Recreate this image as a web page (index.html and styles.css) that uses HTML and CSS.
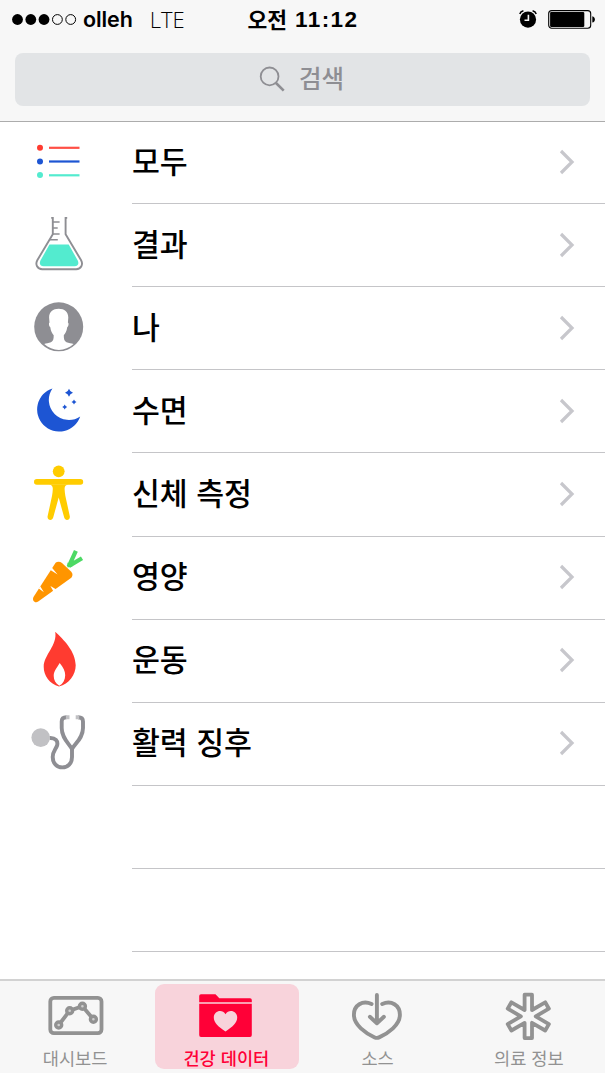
FILE: index.html
```html
<!DOCTYPE html>
<html lang="ko">
<head>
    <meta charset="UTF-8">
    <meta name="viewport" content="width=device-width, initial-scale=1.0">
    <title>건강 데이터</title>
    <link rel="stylesheet" href="styles.css">
</head>
<body>
    <div class="app">
        <div class="header">
            <div class="status-bar">
                <div class="status-left">
                    <svg class="signal" width="65" height="12" viewBox="0 0 65 12">
                        <circle cx="5.5" cy="5.5" r="5.4"/>
                        <circle cx="18.8" cy="5.5" r="5.4"/>
                        <circle cx="32" cy="5.5" r="5.4"/>
                        <circle class="empty" cx="45.4" cy="5.5" r="4.9"/>
                        <circle class="empty" cx="58.7" cy="5.5" r="4.9"/>
                    </svg>
                    <span class="carrier">olleh</span>
                    <span class="network">LTE</span>
                </div>
                <div class="status-time"><span class="ampm">오전</span><span class="clock">11:12</span></div>
                <div class="status-right">
                    <svg width="20" height="20" viewBox="0 0 20 20">
                        <circle cx="10" cy="9.6" r="8.1"/>
                        <path d="M1.8 4C2.3 2.2 3.6 1.2 5.4 0.8M18.2 4C17.7 2.2 16.4 1.2 14.6 0.8" fill="none" stroke="#000" stroke-width="1.5"/>
                        <path d="M10.4 4.8V10.3H6.5" fill="none" stroke="#f7f7f7" stroke-width="1.6"/>
                    </svg>
                    <svg width="48" height="20" viewBox="0 0 48 20">
                        <rect x="0.7" y="0.6" width="42" height="17.6" rx="3" fill="none" stroke="#000" stroke-width="1.1"/>
                        <rect x="2.1" y="1.9" width="34.2" height="15" rx="1.2"/>
                        <path d="M44.3 6.2C47.8 6.8 47.8 12 44.3 12.6Z"/>
                    </svg>
                </div>
            </div>
            <div class="search">
                <svg width="27" height="27" viewBox="0 0 27 27">
                    <circle cx="10.6" cy="10.4" r="8.9"/>
                    <path d="M17 17L24.7 24.6" stroke-width="2.6"/>
                </svg>
                <span>검색</span>
            </div>
        </div>

        <div class="list">
            <a href="#" class="row">
                <svg class="row-icon" viewBox="0 0 60 60">
                    <circle cx="11" cy="15.8" r="3" fill="#ff3b30"/>
                    <circle cx="11" cy="29.5" r="3" fill="#1d55d3"/>
                    <circle cx="11" cy="43.1" r="3" fill="#53ebcf"/>
                    <path d="M20 15.8H50.5" stroke="#ff4f45" stroke-width="2.2"/>
                    <path d="M20 29.5H50.5" stroke="#1d55d3" stroke-width="2.2"/>
                    <path d="M20 43.3H50.5" stroke="#53ebcf" stroke-width="2.2"/>
                </svg>
                <span class="row-label">모두</span>
                <svg class="chevron" viewBox="0 0 16 26"><path d="M2 2L13 13L2 24"/></svg>
            </a>
            <a href="#" class="row">
                <svg class="row-icon" viewBox="0 0 60 60">
                    <path d="M20.5 29.5H39.7L48.6 45.3C50.2 48.3 49.3 51.2 45.6 51.2H14.6C10.9 51.2 10 48.3 11.6 45.3Z" fill="#53ebcf"/>
                    <g fill="none" stroke="#8e8e93" stroke-width="1.9">
                        <path d="M22.2 2.9H23.8V19.3L8.3 45.2C6 49.5 8.3 54.2 13.2 54.2H47.2C52.1 54.2 54.4 49.5 52.1 45.2L36.6 19.3V2.9H38.2"/>
                        <path d="M24 7H30.6M24 13H28.7M23.5 19H30.6M20.8 24.8H28.8" stroke-width="1.6"/>
                    </g>
                </svg>
                <span class="row-label">결과</span>
                <svg class="chevron" viewBox="0 0 16 26"><path d="M2 2L13 13L2 24"/></svg>
            </a>
            <a href="#" class="row">
                <svg class="row-icon" viewBox="0 0 60 60">
                    <circle cx="29.7" cy="28.8" r="24.5" fill="#8e8e93"/>
                    <path d="M29.7 10.8C35.5 10.8 39.3 14 39.3 19.5L38.9 24.6C40 25.2 39.7 28.4 38.2 29.2C37.7 33 36.4 35.6 34.8 37.2C34.8 40.5 35 42.8 37.5 44.2C39.7 45.2 42.5 45 44.6 46.1C36.5 53.8 23.3 53.8 15.2 46.1C17 45 19.7 45.2 22 44.2C24.5 42.8 24.7 40.5 24.7 37.2C23.1 35.6 21.8 33 21.3 29.2C19.8 28.4 19.5 25.2 20.5 24.6L20.1 19.5C20.1 14 24 10.8 29.7 10.8Z" fill="#fff"/>
                </svg>
                <span class="row-label">나</span>
                <svg class="chevron" viewBox="0 0 16 26"><path d="M2 2L13 13L2 24"/></svg>
            </a>
            <a href="#" class="row">
                <svg class="row-icon" viewBox="0 0 60 60" fill="#1d55d3">
                    <path d="M23.5 7.4A22.1 22.1 0 1 0 51.2 35.4A20 20 0 0 1 23.5 7.4Z"/>
                    <path d="M40 7.8Q40.9 10.9 44 11.8Q40.9 12.7 40 15.8Q39.1 12.7 36 11.8Q39.1 10.9 40 7.8Z"/>
                    <path d="M45 18.6Q45.6 20.5 47.5 21.1Q45.6 21.7 45 23.6Q44.4 21.7 42.5 21.1Q44.4 20.5 45 18.6Z"/>
                    <path d="M35.7 23.6Q36.3 25.5 38.2 26.1Q36.3 26.7 35.7 28.6Q35.1 26.7 33.2 26.1Q35.1 25.5 35.7 23.6Z"/>
                </svg>
                <span class="row-label">수면</span>
                <svg class="chevron" viewBox="0 0 16 26"><path d="M2 2L13 13L2 24"/></svg>
            </a>
            <a href="#" class="row">
                <svg class="row-icon" viewBox="0 0 60 60" fill="#fc0">
                    <circle cx="29.7" cy="7.3" r="5.9"/>
                    <rect x="5" y="15.1" width="49.2" height="5.7" rx="2.8"/>
                    <path d="M20 20.5C22.7 20.8 23.9 22 23.8 25C23.6 30 22.7 33.5 21.7 38L18.6 52.3C17.9 56.3 23.2 57.5 24.2 53.6L29.7 33.5L35.2 53.6C36.2 57.5 41.5 56.3 40.8 52.3L37.7 38C36.7 33.5 35.8 30 35.6 25C35.5 22 36.7 20.8 39.4 20.5Z"/>
                </svg>
                <span class="row-label">신체 측정</span>
                <svg class="chevron" viewBox="0 0 16 26"><path d="M2 2L13 13L2 24"/></svg>
            </a>
            <a href="#" class="row">
                <svg class="row-icon" viewBox="0 0 60 60">
                    <path d="M26.6 15.8C28.3 14.2 31 14.3 33 16L42 24.4C44.3 26.8 43.6 29.6 41.6 31.3L9.2 54.6C6 56.8 2.7 53.4 4.5 50Z" fill="#ff9500"/>
                    <path d="M20.6 22.6L22.6 20.2L28.6 27.6ZM9.8 41.6L11.2 39.2L14.9 45.2ZM21.4 39L27.4 42.6L24.6 44.8Z" fill="#fff"/>
                    <path d="M39.6 19.8L46.9 3.8M40.5 18.6L53 11.3" stroke="#4cd964" stroke-width="4.2" fill="none"/>
                    <path d="M38.5 15.5L43.5 19.2L38.6 20.6Z" fill="#4cd964"/>
                </svg>
                <span class="row-label">영양</span>
                <svg class="chevron" viewBox="0 0 16 26"><path d="M2 2L13 13L2 24"/></svg>
            </a>
            <a href="#" class="row">
                <svg class="row-icon" viewBox="0 0 60 60">
                    <path d="M26.2 1.8C34.5 9.5 46.7 21.5 46.7 35.3C46.7 45 40 53.8 30 56.6C20.5 53.8 14.7 46 14.7 36.8C14.7 25 28.6 15.5 26.2 1.8Z" fill="#ff3b30"/>
                    <path d="M30.7 33C34.3 37.5 36.2 41 36.2 45.2C36.2 50 34 53.5 30.3 55.8C26.5 53.5 24.7 50 24.7 45.8C24.7 41 27.8 38 30.7 33Z" fill="#fff"/>
                </svg>
                <span class="row-label">운동</span>
                <svg class="chevron" viewBox="0 0 16 26"><path d="M2 2L13 13L2 24"/></svg>
            </a>
            <a href="#" class="row">
                <svg class="row-icon" viewBox="0 0 60 60">
                    <g fill="none" stroke="#8e8e93" stroke-width="3.9">
                        <path d="M20.5 25C26.2 24.6 29.5 28 28 32.8C26.5 36.7 23.7 38.4 23.7 44C23.7 50.5 28 54.4 33.3 54.4C38.8 54.4 43 50.5 43 44V35"/>
                        <path d="M37.5 4.3C34.2 4.3 32.7 5.6 32.7 8.5V15C32.7 25 39.5 30 43 36C46.5 30 54 25 54 15V8.5C54 5.6 52.2 4.3 49 4.3"/>
                    </g>
                    <circle cx="11.7" cy="24.6" r="9.3" fill="#c1c1c4"/>
                    <path d="M36.9 4.3H40.5M46.7 4.3H50.2" stroke="#c1c1c4" stroke-width="4"/>
                </svg>
                <span class="row-label">활력 징후</span>
                <svg class="chevron" viewBox="0 0 16 26"><path d="M2 2L13 13L2 24"/></svg>
            </a>
            <div class="row"></div>
            <div class="row"></div>
        </div>

        <div class="tab-bar">
            <a href="#" class="tab">
                <svg class="tab-icon" viewBox="0 0 60 50" fill="none" stroke="#929292">
                    <rect x="4.3" y="7.8" width="51.2" height="35.4" rx="3.6" stroke-width="3.8"/>
                    <path d="M12.7 35L23.7 20.7L36.4 16.3L47.4 29.3" stroke-width="3.8"/>
                    <g fill="#d0d0d0" stroke-width="3.4">
                        <circle cx="12.7" cy="35" r="3"/>
                        <circle cx="23.7" cy="20.7" r="3"/>
                        <circle cx="36.4" cy="16.3" r="3"/>
                        <circle cx="47.4" cy="29.3" r="3"/>
                    </g>
                </svg>
                <span>대시보드</span>
            </a>
            <a href="#" class="tab active">
                <svg class="tab-icon" viewBox="0 0 60 50" fill="#ff0037">
                    <path d="M2.2 12.3V6Q2.2 4.2 4 4.2H18.5L22.3 8.3H53Q54.8 8.3 54.8 10V12.3Z"/>
                    <path d="M2.2 13.8H54.8V45Q54.8 47 53 47H4Q2.2 47 2.2 45Z"/>
                    <path d="M28.5 41.4C21.5 37 16.8 33 16.8 27.6C16.8 20.8 25.2 18.6 28.5 24.2C31.8 18.6 40.2 20.8 40.2 27.6C40.2 33 35.5 37 28.5 41.4Z" fill="#f8d3db"/>
                </svg>
                <span>건강 데이터</span>
            </a>
            <a href="#" class="tab">
                <svg class="tab-icon" viewBox="0 0 60 50" fill="none" stroke="#929292" stroke-width="3.9" stroke-linecap="round" stroke-linejoin="round">
                    <path d="M23.6 14C14.5 9.8 5.9 15.3 5.9 24.8C5.9 35 17.5 43.2 26.7 47.4Q28.9 48.4 31.1 47.4C40.3 43.2 51.9 35 51.9 24.8C51.9 15.3 43.3 9.8 34.2 14"/>
                    <path d="M28.9 5V33M21.9 26.8L28.9 33.3L35.9 26.8"/>
                </svg>
                <span>소스</span>
            </a>
            <a href="#" class="tab">
                <svg class="tab-icon" viewBox="0 0 60 50" fill="none" stroke="#929292" stroke-width="3.8" stroke-linejoin="round">
                    <path transform="translate(29.3 26.4)" d="M-3.7 -21.7L3.7 -21.7L3.7 -6.4L16.9 -14.1L20.6 -7.7L7.4 0L20.6 7.7L16.9 14.1L3.7 6.4L3.7 21.7L-3.7 21.7L-3.7 6.4L-16.9 14.1L-20.6 7.7L-7.4 0L-20.6 -7.7L-16.9 -14.1L-3.7 -6.4Z"/>
                </svg>
                <span>의료 정보</span>
            </a>
        </div>
    </div>
</body>
</html>
```
FILE: styles.css
```css
* {
    margin: 0;
    padding: 0;
    box-sizing: border-box;
}

body {
    font-family: "Liberation Sans", "Noto Sans CJK KR", sans-serif;
    background-color: #fff;
    color: #000;
}

a {
    color: inherit;
    text-decoration: none;
}

svg {
    display: block;
    flex-shrink: 0;
}

.app {
    height: 1073px;
    display: flex;
    flex-direction: column;
    overflow: hidden;
}

.header {
    height: 122px;
    flex-shrink: 0;
    background-color: #f7f7f7;
    border-bottom: 1px solid #acacac;
}

.status-bar {
    height: 39px;
    padding: 0 9px 0 12px;
    display: grid;
    grid-template-columns: 235.5px 1fr auto;
    align-items: center;
}

.status-left,
.status-time,
.status-right {
    display: flex;
    align-items: center;
}

.signal .empty {
    fill: none;
    stroke: #000;
    stroke-width: 1;
}

.carrier {
    margin-left: 6px;
    font-family: Inter, sans-serif;
    font-size: 21.5px;
    font-weight: 600;
    letter-spacing: -0.1px;
    line-height: 39px;
}

.network {
    margin-left: 17px;
    font-family: "Open Sans", sans-serif;
    font-size: 22px;
    font-weight: 300;
    line-height: 39px;
}

.ampm {
    font-family: "Noto Sans CJK KR", sans-serif;
    font-size: 21.5px;
    font-weight: bold;
    line-height: 35px;
    padding-bottom: 3px;
}

.clock {
    margin-left: 8px;
    font-size: 22.5px;
    font-weight: bold;
    letter-spacing: 1.4px;
}

.status-right {
    gap: 10px;
}

.search {
    height: 53px;
    margin: 14px 15px 0;
    padding-right: 2px;
    border-radius: 8px;
    background-color: #e2e4e6;
    color: #8e8e93;
    display: flex;
    align-items: center;
    justify-content: center;
    gap: 13px;
}

.search svg {
    fill: none;
    stroke: #8e8e93;
    stroke-width: 1.8;
}

.search span {
    font-family: "Noto Sans CJK KR", sans-serif;
    font-size: 24.5px;
    font-weight: 500;
    line-height: 46px;
    padding-bottom: 4px;
}

.list {
    flex: 1;
    min-height: 0;
    overflow: hidden;
}

.row {
    height: 83.1px;
    padding: 0 30px 2px 29px;
    display: flex;
    align-items: center;
    background: linear-gradient(#c5c5c8, #c5c5c8) 132px 100% / 100% 1px no-repeat;
}

.row:first-child {
    height: 82.2px;
    padding-bottom: 3px;
}

.row-icon {
    width: 60px;
    height: 60px;
}

.row-label {
    flex: 1;
    margin-left: 43px;
    padding-bottom: 4px;
    font-family: "Noto Sans CJK KR", sans-serif;
    font-size: 30.3px;
    font-weight: 500;
    line-height: 70px;
}

.chevron {
    width: 16px;
    height: 26px;
    fill: none;
    stroke: #c7c7cc;
    stroke-width: 3.2;
}

.tab-bar {
    height: 94px;
    flex-shrink: 0;
    padding-top: 3px;
    border-top: 2px solid #d2d2d2;
    background-color: #f7f7f7;
    display: grid;
    grid-template-columns: repeat(4, 1fr);
    justify-items: center;
}

.tab {
    width: 144px;
    height: 85px;
    padding-top: 6px;
    border-radius: 9px;
    display: flex;
    flex-direction: column;
    align-items: center;
    color: #929292;
    font-family: "Noto Sans CJK KR", sans-serif;
    font-size: 17.6px;
    line-height: 36px;
    white-space: nowrap;
}

.tab span {
    padding-right: 1px;
}

.tab.active {
    background-color: #f8d3db;
    color: #ff0037;
    font-weight: 500;
}

.tab-icon {
    width: 60px;
    height: 50px;
}
```
